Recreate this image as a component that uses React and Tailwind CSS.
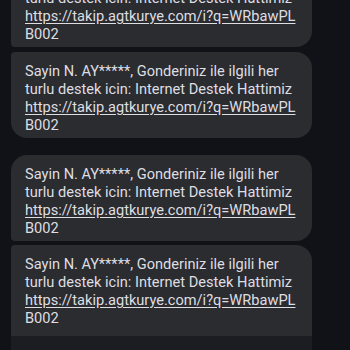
import React from "react";

const lines = [
  "Sayin N. AY*****, Gonderiniz ile ilgili her",
  "turlu destek icin: Internet Destek Hattimiz",
];

const Bubble = ({ className = "" }) => (
  <div
    className={`w-[301px] bg-[#2b2c30] pl-[14px] pr-2 pt-[10px] pb-[4px] text-[14.6px] leading-[18px] text-[#dedee2] ${className}`}
  >
    {lines.map((l) => (
      <div key={l} className="whitespace-nowrap">
        {l}
      </div>
    ))}
    <div className="whitespace-nowrap underline underline-offset-2">
      https://takip.agtkurye.com/i?q=WRbawPL
    </div>
    <div className="whitespace-nowrap">B002</div>
  </div>
);

export default function App() {
  return (
    <div
      className="h-[350px] w-[350px] overflow-hidden bg-[#101217]"
      style={{ fontFamily: "Roboto, 'Noto Sans', sans-serif" }}
    >
      <div className="mt-[-39px] flex flex-col pl-[11px]">
        <Bubble className="rounded-tl-[16px] rounded-tr-[16px] rounded-br-[16px] rounded-bl-[4px]" />
        <Bubble className="mt-[5px] rounded-tl-[4px] rounded-tr-[16px] rounded-br-[16px] rounded-bl-[16px]" />
        <Bubble className="mt-[17px] rounded-tl-[16px] rounded-tr-[16px] rounded-br-[16px] rounded-bl-[4px]" />
        <Bubble className="mt-[4px] h-[91px] rounded-tl-[4px] rounded-tr-[16px]" />
        <div className="h-[20px] w-[301px] bg-[#1c1d22]" />
      </div>
    </div>
  );
}
